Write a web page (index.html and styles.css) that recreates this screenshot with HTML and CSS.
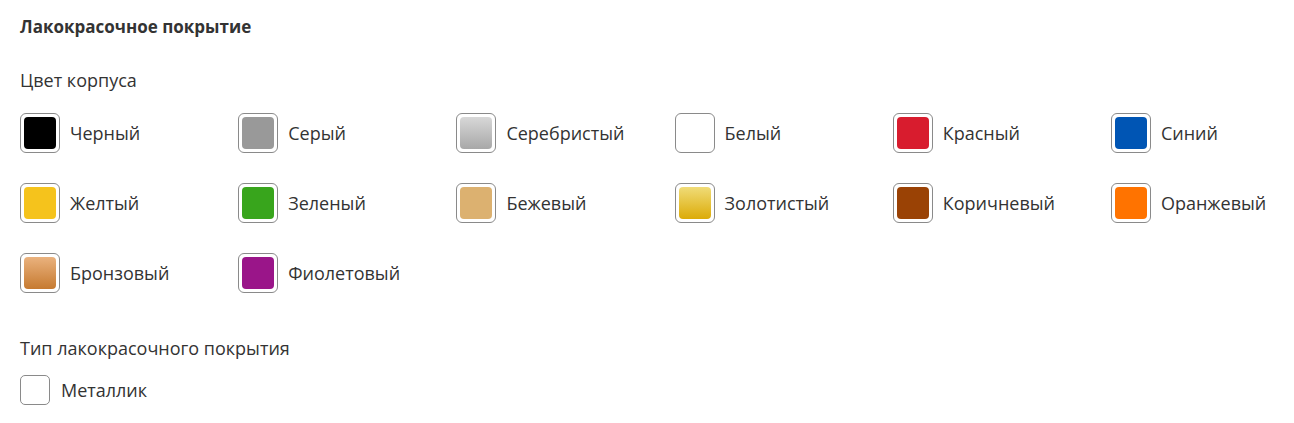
FILE: index.html
```html
<!DOCTYPE html>
<html lang="ru">
<head>
    <meta charset="UTF-8">
    <title>Лакокрасочное покрытие</title>
    <link rel="stylesheet" href="styles.css">
</head>
<body>
    <div class="paint-section">
        <h3 class="section-title">Лакокрасочное покрытие</h3>

        <div class="filter-label">Цвет корпуса</div>
        <div class="color-grid">
            <label class="color-item"><span class="swatch"><span class="fill black"></span></span>Черный</label>
            <label class="color-item"><span class="swatch"><span class="fill gray"></span></span>Серый</label>
            <label class="color-item"><span class="swatch"><span class="fill silver"></span></span>Серебристый</label>
            <label class="color-item"><span class="swatch"><span class="fill white"></span></span>Белый</label>
            <label class="color-item"><span class="swatch"><span class="fill red"></span></span>Красный</label>
            <label class="color-item"><span class="swatch"><span class="fill blue"></span></span>Синий</label>
            <label class="color-item"><span class="swatch"><span class="fill yellow"></span></span>Желтый</label>
            <label class="color-item"><span class="swatch"><span class="fill green"></span></span>Зеленый</label>
            <label class="color-item"><span class="swatch"><span class="fill beige"></span></span>Бежевый</label>
            <label class="color-item"><span class="swatch"><span class="fill gold"></span></span>Золотистый</label>
            <label class="color-item"><span class="swatch"><span class="fill brown"></span></span>Коричневый</label>
            <label class="color-item"><span class="swatch"><span class="fill orange"></span></span>Оранжевый</label>
            <label class="color-item"><span class="swatch"><span class="fill bronze"></span></span>Бронзовый</label>
            <label class="color-item"><span class="swatch"><span class="fill violet"></span></span>Фиолетовый</label>
        </div>

        <div class="filter-label type-label">Тип лакокрасочного покрытия</div>
        <label class="check-item"><span class="checkbox"></span>Металлик</label>
    </div>
</body>
</html>
```

FILE: styles.css
```css
body {
    margin: 0;
    background: #fff;
    font-family: "Open Sans", "Noto Sans", sans-serif;
    color: #333;
}

.paint-section {
    padding: 14px 20px 0 20px;
}

.section-title {
    margin: 0;
    font-size: 17px;
    font-weight: 700;
    line-height: 26px;
    color: #333;
}

.filter-label {
    margin-top: 28px;
    font-size: 18px;
    line-height: 24px;
}

.color-grid {
    display: grid;
    grid-template-columns: repeat(6, 218.2px);
    row-gap: 30px;
    margin-top: 21px;
}

.color-item {
    display: flex;
    align-items: center;
    gap: 10px;
    font-size: 18px;
    cursor: pointer;
}

.swatch {
    box-sizing: border-box;
    width: 40px;
    height: 40px;
    padding: 3px;
    border: 1px solid #8a8a8a;
    border-radius: 6px;
    background: #fff;
}

.fill {
    display: block;
    width: 100%;
    height: 100%;
    border-radius: 4px;
}

.black { background: #000; }
.gray { background: #999; }
.silver { background: linear-gradient(#d8d8d8, #a8a8a8); }
.white { background: #fff; }
.red { background: #d81c2e; }
.blue { background: #0055b4; }
.yellow { background: #f5c31c; }
.green { background: #38a51c; }
.beige { background: #dcb170; }
.gold { background: linear-gradient(#f0dc78, #dcab08); }
.brown { background: #9a4205; }
.orange { background: #ff7300; }
.bronze { background: linear-gradient(#eab27e, #c67a30); }
.violet { background: #9a1589; }

.type-label {
    margin-top: 43px;
}

.check-item {
    display: flex;
    align-items: center;
    gap: 11px;
    margin-top: 15px;
    font-size: 18px;
    cursor: pointer;
}

.checkbox {
    box-sizing: border-box;
    width: 30px;
    height: 30px;
    border: 1px solid #8a8a8a;
    border-radius: 5px;
}
```
